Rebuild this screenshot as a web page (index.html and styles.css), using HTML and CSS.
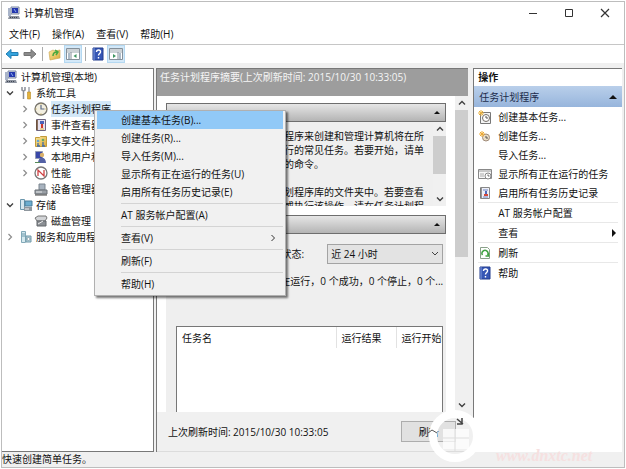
FILE: index.html
```html
<!DOCTYPE html>
<html lang="zh-CN">
<head>
<meta charset="utf-8">
<title>计算机管理</title>
<link rel="stylesheet" href="styles.css">
</head>
<body>
<svg class="defs" aria-hidden="true">
  <linearGradient id="gold" x1="0" y1="0" x2="1" y2="1"><stop offset="0" stop-color="#fbe9a0"/><stop offset="1" stop-color="#dba936"/></linearGradient>
  <symbol id="pc" viewBox="0 0 14 14"><path d="M4 1h8v7H4z" fill="#d5dae6" stroke="#7b86a3"/><path d="M5 2h6v5H5z" fill="#2437ae"/><path d="M1 2h3v8H1z" fill="#a9b4c9"/><path d="M7 3l2 3" stroke="#8fb0f0"/><path d="M2 10h10l1 3H1z" fill="#8d939f"/><path d="M3 11.500h8" stroke="#3e4553" stroke-dasharray="1 1"/></symbol>
  <symbol id="help" viewBox="0 0 12 14"><path d="M1 1h10v12H1z" fill="#3656b5" stroke="#223c8e"/><path d="M2 1v12" stroke="#7f9be0"/><path d="M4.500 5c0-3 4.500-2.500 4 0 0 1.500-2 1.500-2 3.500M6.500 10v1.500" fill="none" stroke="#fff" stroke-width="1.400"/></symbol>
  <symbol id="clock" viewBox="0 0 14 14"><circle cx="7" cy="7" r="6" fill="#f3efe0" stroke="#77746c" stroke-width="1.300"/><path d="M7 3v4h3.500" fill="none" stroke="#5d6b86" stroke-width="1.200"/><path d="M7 1.500v1M7 11.500v1M1.500 7h1M11.500 7h1" stroke="#c0a24a"/></symbol>
  <symbol id="window" viewBox="0 0 14 12"><path d="M.5.500h13v11H.5z" fill="#fff" stroke="#85909a"/><path d="M1 2h12M1 4h12" stroke="#9aa5ad"/></symbol>
  <symbol id="chev" viewBox="0 0 8 8"><path d="M2.500 1l3 3-3 3" fill="none" stroke="#8c8c8c" stroke-width="1.200"/></symbol>
  <symbol id="chevdown" viewBox="0 0 8 8"><path d="M1 2.500l3 3 3-3" fill="none" stroke="#404040" stroke-width="1.400"/></symbol>
  <symbol id="chevup" viewBox="0 0 8 8"><path d="M1 5.500l3-3 3 3" fill="none" stroke="#404040" stroke-width="1.400"/></symbol>
</svg>
<div class="window">
  <header class="titlebar">
    <svg class="ico" aria-hidden="true"><use href="#pc"/></svg>
    <h1>计算机管理</h1>
    <div class="winbtns">
      <button aria-label="最小化"><svg viewBox="0 0 10 10"><path d="M1 5.500h8" stroke="#333"/></svg></button>
      <button aria-label="最大化"><svg viewBox="0 0 10 10"><path d="M1.500 1.500h7v7h-7z" fill="none" stroke="#333"/></svg></button>
      <button aria-label="关闭"><svg viewBox="0 0 10 10"><path d="M1 1l8 8M9 1l-8 8" stroke="#333" stroke-width="1.200"/></svg></button>
    </div>
  </header>
  <nav class="menubar">
    <button>文件(F)</button><button>操作(A)</button><button>查看(V)</button><button>帮助(H)</button>
  </nav>
  <div class="toolbar">
    <button aria-label="后退"><svg viewBox="0 0 14 12"><path d="M1 6l5-4.500v3h7v3H6v3z" fill="#35a3dc" stroke="#237fb5"/></svg></button>
    <button aria-label="前进"><svg viewBox="0 0 14 12"><path d="M13 6L8 1.500v3H1v3h7v3z" fill="#8b8b8b" stroke="#757575"/></svg></button>
    <i class="vr"></i>
    <button aria-label="向上"><svg viewBox="0 0 14 12"><path d="M1 4l4-2 2 1 5-1v8L2 12z" fill="url(#gold)" stroke="#c8a04a" stroke-width=".6"/><path d="M5 8c0-3 2-4 4-4M7 2l3 2-2 3" fill="none" stroke="#4aa83f" stroke-width="1.500"/></svg></button>
    <button class="on" aria-label="显示控制台树"><svg viewBox="0 0 14 12"><use href="#window"/><path d="M5 4v8" stroke="#85909a"/><path d="M2 6h2M2 8h2M2 10h2" stroke="#5a7894"/><path d="M10.500 6v4l-3-2z" fill="#3d9560"/></svg></button>
    <i class="vr"></i>
    <button aria-label="帮助"><svg viewBox="0 0 14 14"><use href="#help" x="1" width="12" height="14"/></svg></button>
    <button class="on" aria-label="显示操作窗格"><svg viewBox="0 0 14 12"><use href="#window"/><path d="M9 4v8" stroke="#85909a"/><path d="M10 6h2M10 8h2M10 10h2" stroke="#5a7894"/><path d="M4 6v4l3-2z" fill="#3d9560"/></svg></button>
  </div>
  <main class="panes">
    <ul class="tree">
      <li><svg class="ico" aria-hidden="true"><use href="#pc"/></svg>计算机管理(本地)</li>
      <li class="l1"><svg class="exp" aria-hidden="true"><use href="#chevdown"/></svg><svg class="ico" viewBox="0 0 14 14" aria-hidden="true"><path d="M3 1v3l1.500 1L6 4V1M4.500 5v8" fill="none" stroke="#8b8f98" stroke-width="1.500"/><path d="M9 1h2v5H9z" fill="#b9bcc2"/><path d="M8.500 6h3v7h-3z" fill="#e3b23d" stroke="#b98c27" stroke-width=".6"/></svg>系统工具</li>
      <li class="l2"><svg class="exp" aria-hidden="true"><use href="#chev"/></svg><svg class="ico" aria-hidden="true"><use href="#clock"/></svg><span class="sel">任务计划程序</span></li>
      <li class="l2"><svg class="exp" aria-hidden="true"><use href="#chev"/></svg><svg class="ico" viewBox="0 0 14 14" aria-hidden="true"><path d="M2.500 1.500h9v11h-9z" fill="#e6e1ef" stroke="#6d6580"/><path d="M3 2v10" stroke="#6b4a2c" stroke-width="1.500"/><path d="M6 3h4v3H6z" fill="#4d63b8"/><path d="M8 6v4" stroke="#d0392c" stroke-width="2"/><path d="M6 11h4" stroke="#e7b93d"/></svg>事件查看器</li>
      <li class="l2"><svg class="exp" aria-hidden="true"><use href="#chev"/></svg><svg class="ico" viewBox="0 0 14 14" aria-hidden="true"><path d="M1.500 3.500h4l1-1h6v10h-11z" fill="url(#gold)" stroke="#c39b39"/><path d="M4 9v3M9 8v4M3 12h3M8 12h3" stroke="#416ca8" stroke-width="1.300"/><circle cx="4" cy="7" r="1.300" fill="#67a5cf"/><circle cx="9" cy="6" r="1.300" fill="#68a667"/></svg>共享文件夹</li>
      <li class="l2"><svg class="exp" aria-hidden="true"><use href="#chev"/></svg><svg class="ico" viewBox="0 0 14 14" aria-hidden="true"><path d="M1.500 1.500h7v7h-7z" fill="#3947a8" stroke="#929bb4"/><circle cx="8" cy="5" r="2.200" fill="#d9b06a"/><path d="M4 13c0-7 8-7 8 0z" fill="#5361a5"/><path d="M1 12h5v1H1z" fill="#578a58"/></svg>本地用户和组</li>
      <li class="l2"><svg class="exp" aria-hidden="true"><use href="#chev"/></svg><svg class="ico" viewBox="0 0 14 14" aria-hidden="true"><circle cx="7" cy="7" r="6" fill="#fff" stroke="#777" stroke-width="1.300"/><path d="M4 10V4l6 6V4" fill="none" stroke="#cd4143" stroke-width="1.300"/></svg>性能</li>
      <li class="l2"><i class="exp"></i><svg class="ico" viewBox="0 0 14 14" aria-hidden="true"><path d="M5 2h6v6H5z" fill="#a8b3bf" stroke="#7a858f"/><path d="M1 8h12v4H1z" fill="#9aa0a6" stroke="#6b7177"/><path d="M2 10h6" stroke="#e3e6e8"/><path d="M1 13h12" stroke="#444"/></svg>设备管理器</li>
      <li class="l1"><svg class="exp" aria-hidden="true"><use href="#chevdown"/></svg><svg class="ico" viewBox="0 0 14 14" aria-hidden="true"><path d="M1.500 1.500h4v10h-4z" fill="#d6e7ef" stroke="#6b97ad"/><path d="M6 3h7v5H6z" fill="#6caed0" stroke="#4b7d99"/><path d="M5 9h8v4H5z" fill="#8f979e"/><path d="M6 11h4" stroke="#eee"/></svg>存储</li>
      <li class="l2"><i class="exp"></i><svg class="ico" viewBox="0 0 14 14" aria-hidden="true"><path d="M1 4l3-2h8l1 2-2 3H3z" fill="#d2d4d7" stroke="#777"/><path d="M3 7h9v5H3z" fill="#8b8f94" stroke="#63676b"/><path d="M4 10l5-3" stroke="#eee"/></svg>磁盘管理</li>
      <li class="l1"><svg class="exp" aria-hidden="true"><use href="#chev"/></svg><svg class="ico" viewBox="0 0 14 14" aria-hidden="true"><path d="M2.500 1.500h4v11h-4z" fill="#d5e9ef" stroke="#83a9b8"/><path d="M3 4h3M3 6h3" stroke="#6e9aac"/><path d="M7 6h5v6H7z" fill="#b6d3df" stroke="#7198a7"/><circle cx="9.500" cy="9" r="1.500" fill="#fff" stroke="#617d88" stroke-width=".6"/></svg>服务和应用程序</li>
    </ul>

    <section class="center">
      <h2>任务计划程序摘要(上次刷新时间: 2015/10/30 10:33:05)</h2>
      <div class="scrollarea">
        <div class="cards">
          <div class="card overview">
            <button class="cardhead" aria-label="概述"><b class="tri"></b></button>
            <div class="cardbody">
              <p>您可以使用任务计划程序来创建和管理计算机将在所<br>您指定的时间自动执行的常见任务。若要开始，请单<br>击右侧操作菜单当中的命令。<br><br>各任务存储在任务计划程序库的文件夹中。若要查看<br>某个任务的详细信息或执行该操作，请在任务计划程</p>
              <div class="scroll inner"><svg><use href="#chevup"/></svg><i></i><svg><use href="#chevdown"/></svg></div>
            </div>
          </div>
          <div class="card status">
            <button class="cardhead" aria-label="任务状态"><b class="tri"></b></button>
            <div class="cardbody">
              <div class="period"><label for="period">状态:</label><select id="period"><option>近 24 小时</option></select></div>
              <p class="summary">正在运行，0 个成功，0 个停止，0 个...</p>
              <div class="tablebox">
                <table>
                  <thead><tr><th class="name">任务名</th><th class="res">运行结果</th><th>运行开始时间</th></tr></thead>
                </table>
              </div>
            </div>
          </div>
        </div>
        <div class="scroll outer"><svg><use href="#chevup"/></svg><i></i><svg><use href="#chevdown"/></svg></div>
      </div>
      <footer class="refresh"><span>上次刷新时间: 2015/10/30 10:33:05</span><button>刷新</button></footer>
    </section>

    <aside class="actions">
      <h2>操作</h2>
      <h3>任务计划程序<b class="tri"></b></h3>
      <ul>
        <li><svg class="ico" viewBox="0 0 14 14" aria-hidden="true"><path d="M2.500 2.500h10v11h-10z" fill="#f5f5f5" stroke="#777"/><circle cx="8" cy="8" r="3.500" fill="#fff" stroke="#746e68"/><path d="M8 6v2h2" fill="none" stroke="#555"/><path d="M0 3h6M3 0v6M1 1l4 4M5 1L1 5" stroke="#eab13c"/></svg><a href="#">创建基本任务...</a></li>
        <li><svg class="ico" viewBox="0 0 14 14" aria-hidden="true"><circle cx="8" cy="8.500" r="3.500" fill="#e9dcc4" stroke="#9f8a78"/><path d="M8 7v2h2" fill="none" stroke="#555"/><path d="M1 5h6M4 2v6M2 3l4 4M6 3L2 7" stroke="#eda932"/></svg><a href="#">创建任务...</a></li>
        <li><i class="ico"></i><a href="#">导入任务...</a></li>
        <li><svg class="ico" viewBox="0 0 14 14" aria-hidden="true"><path d="M.5 2.500h13v9H.5z" fill="#f7f7f7" stroke="#888"/><path d="M1 4h12" stroke="#999"/><path d="M2 7h4M2 9h4" stroke="#aaa"/><circle cx="10" cy="9" r="3" fill="#fff" stroke="#888"/><path d="M10 7.500V9h1.500" fill="none" stroke="#666"/></svg><a href="#">显示所有正在运行的任务</a></li>
        <li class="line"><svg class="ico" viewBox="0 0 14 14" aria-hidden="true"><path d="M2.500 1.500h9v11h-9z" fill="#eef0f8" stroke="#888"/><path d="M3 2v10" stroke="#777" stroke-width="1.500"/><path d="M5 4h5M5 11h5" stroke="#6f83bf"/><path d="M8 5v3" stroke="#5269bb" stroke-width="2"/><path d="M6 9h4" stroke="#d4493b" stroke-width="2"/></svg><a href="#">启用所有任务历史记录</a></li>
        <li class="line"><i class="ico"></i><a href="#">AT 服务帐户配置</a></li>
        <li class="line"><i class="ico"></i><a href="#">查看</a><b class="more"></b></li>
        <li class="line"><svg class="ico" viewBox="0 0 14 14" aria-hidden="true"><path d="M2.500 1.500h7l2 2v9h-9z" fill="#fff" stroke="#8aa08a"/><path d="M4.500 9a3 3 0 1 1 5 0M10.500 7v3h-3" fill="none" stroke="#3fa241" stroke-width="1.500"/></svg><a href="#">刷新</a></li>
        <li><svg class="ico" aria-hidden="true"><use href="#help"/></svg><a href="#">帮助</a></li>
      </ul>
    </aside>
  </main>
  <footer class="statusbar">快速创建简单任务。</footer>

  <div class="context" role="menu">
    <button class="hot" role="menuitem">创建基本任务(B)...</button>
    <button role="menuitem">创建任务(R)...</button>
    <button role="menuitem">导入任务(M)...</button>
    <button role="menuitem">显示所有正在运行的任务(U)</button>
    <button role="menuitem">启用所有任务历史记录(E)</button>
    <hr>
    <button role="menuitem">AT 服务帐户配置(A)</button>
    <hr>
    <button role="menuitem">查看(V)<svg viewBox="0 0 8 8"><path d="M2.500 1l3 3-3 3" fill="none" stroke="#333"/></svg></button>
    <hr>
    <button role="menuitem">刷新(F)</button>
    <hr>
    <button role="menuitem">帮助(H)</button>
  </div>

  <div class="mark">
    <svg viewBox="0 0 54 54" aria-hidden="true"><circle cx="27" cy="27" r="22" fill="none" stroke="#fff" stroke-width="8"/><path d="M15 20h26v20H15z" fill="#fff" opacity=".75"/><path d="M27 20v22M15 29h26" stroke="#ddd"/><path d="M29 10l6 5M34 9v6h-5" fill="none" stroke="#444" stroke-width="1.500"/><path d="M0 24l4-3 5 3" fill="none" stroke="#555"/></svg>
    <div><strong>电脑系统城</strong><span>www.dnxtc.net</span></div>
  </div>
</div>
</body>
</html>
```
FILE: styles.css
```css
* { box-sizing: border-box; }
html, body { height: 100%; margin: 0; }
body {
  padding: 1px;
  background: #fff;
  color: #111;
  font: 10px/16px "Open Sans", "Noto Sans CJK SC", sans-serif;
}
button, select { font: inherit; color: inherit; border: 0; padding: 0; margin: 0; background: none; }
ul { list-style: none; margin: 0; padding: 0; }
h1, h2, h3, p { margin: 0; font: inherit; }
a { color: inherit; text-decoration: none; }
svg { display: block; flex: none; }
.defs { position: absolute; width: 0; height: 0; }
.ico { width: 14px; height: 14px; flex: none; }

.window {
  position: relative;
  height: 100%;
  display: flex;
  flex-direction: column;
  border: 1px solid #bdbdbd;
  background: #fff;
  overflow: hidden;
}
.titlebar { display: flex; align-items: center; gap: 3px; height: 22px; padding-left: 5px; flex: none; }
.winbtns { display: flex; margin-left: auto; padding-right: 1px; }
.winbtns button { width: 36px; height: 22px; display: grid; place-items: center; }
.winbtns svg { width: 10px; height: 10px; }
.menubar { display: flex; gap: 12px; height: 21px; padding-left: 7px; flex: none; border-bottom: 1px solid #c6c6c6; }
.toolbar { display: flex; align-items: center; height: 18px; padding-left: 1px; flex: none; }
.toolbar button { width: 18px; height: 18px; display: grid; place-items: center; }
.toolbar button svg { width: 14px; height: 14px; }
.toolbar .on { background: #d3e8f8; border: 1px solid #b4d8f1; }
.vr { width: 1px; height: 14px; margin: 0 3px; background: #ababab; }

.panes { flex: 1; min-height: 0; display: flex; padding: 5px 2px 0 0; background: #f0f0f0; }
.tree {
  width: 24.5%;
  flex: none;
  border: 1px solid #787878;
  border-left: 0;
  background: #fff;
  overflow: hidden;
  white-space: nowrap;
}
.tree li { display: flex; align-items: center; height: 16px; padding-left: 2px; gap: 3px; }
.tree .l1 { padding-left: 4px; }
.tree .l2 { padding-left: 19px; }
.exp { width: 8px; height: 8px; flex: none; margin-right: 2px; }
.sel { background: #d3e8f8; }

.center {
  flex: 1;
  min-width: 0;
  display: flex;
  flex-direction: column;
  margin: 0 5px 0 2px;
  border-top: 1px solid #787878;
  border-left: 1px solid #787878;
  background: #fff;
}
.center h2 { height: 27px; padding-left: 3px; background: #9d9d9d; color: #f5f5f5; flex: none; white-space: nowrap; overflow: hidden; }
.scrollarea { flex: 1; min-height: 0; display: flex; }
.cards { flex: 1; min-width: 0; display: flex; flex-direction: column; padding: 7px 9px 0 9px; gap: 9px; }
.cardhead {
  display: flex;
  justify-content: flex-end;
  align-items: center;
  width: 100%;
  height: 19px;
  padding-right: 5px;
  border: 1px solid #6e6e6e;
  background: linear-gradient(#e6e6e6, #b4b4b4);
}
.tri { width: 0; height: 0; border: 3px solid transparent; border-top: 0; border-bottom-color: #111; }
.cardbody { background: #efefef; }
.overview .cardbody { display: flex; height: 84px; overflow: hidden; }
.overview p { flex: 1; padding: 7px 0 0 28px; line-height: 14px; white-space: nowrap; }
.scroll { display: flex; flex-direction: column; align-items: center; background: #f0f0f0; flex: none; }
.scroll svg { width: 8px; height: 8px; }
.scroll i { width: 100%; background: #cdcdcd; }
.inner { width: 13px; padding: 3px 0; }
.inner i { height: 38px; margin: 3px 0 auto; }
.outer { width: 13px; padding: 3px 0; }
.outer i { height: 147px; margin: 3px 0 auto; }
.status { flex: 1; min-height: 0; display: flex; flex-direction: column; }
.status .cardbody { flex: 1; min-height: 0; display: flex; flex-direction: column; padding: 10px 3px 0 10px; }
.period { display: flex; justify-content: flex-end; align-items: center; gap: 23px; }
.period select {
  appearance: none;
  width: 116px;
  height: 20px;
  padding: 0 3px;
  border: 1px solid #a3a3a3;
  background: #e3e3e3 url("data:image/svg+xml,%3Csvg xmlns='http://www.w3.org/2000/svg' width='8' height='8'%3E%3Cpath d='M1 2l3 3 3-3' fill='none' stroke='%23444'/%3E%3C/svg%3E") no-repeat right 3px center;
}
.summary { margin: 9px 0 37px; text-align: right; white-space: nowrap; }
.tablebox { flex: 1; min-height: 0; overflow: hidden; border: 1px solid #777; border-bottom: 0; background: #fff; }
table { width: 100%; table-layout: fixed; border-collapse: collapse; }
th { height: 21px; padding: 0 0 0 5px; font-weight: 400; text-align: left; white-space: nowrap; overflow: hidden; border-right: 1px solid #e2e2e2; }
th:last-child { border-right: 0; }
.name { width: 60%; }
.res { width: 60px; }
.refresh {
  display: flex;
  align-items: center;
  justify-content: space-between;
  height: 40px;
  flex: none;
  padding: 0 12px 0 11px;
  background: #f0f0f0;
  border-bottom: 1px solid #dcdcdc;
}
.refresh button { width: 55px; height: 21px; border: 1px solid #adadad; background: #e1e1e1; }

.actions { width: 24%; flex: none; border: 1px solid #787878; border-right: 0; border-bottom: 0; background: #fff; }
.actions h2 { height: 17px; padding-left: 4px; font-weight: 700; }
.actions h3 { display: flex; align-items: center; justify-content: space-between; height: 21px; padding: 0 5px; background: linear-gradient(#b9cfea, #97b5dc); color: #1c2c4c; }
.actions .tri { border-width: 0 4px 4px; }
.actions li { display: flex; align-items: center; height: 19px; margin: 0 4px; padding-right: 2px; gap: 6px; white-space: nowrap; }
.actions .line { height: 20px; border-bottom: 1px solid #e8e8e8; }
.more { margin-left: auto; border: 4px solid transparent; border-right: 0; border-left-color: #111; }
.statusbar { height: 15px; flex: none; line-height: 15px; background: #f0f0f0; }

.context {
  position: absolute;
  left: 92px;
  top: 108px;
  width: 192px;
  padding: 0 2px 2px;
  border: 1px solid #b0b0b0;
  background: #f1f1f1;
  box-shadow: 2px 2px 2px #0008;
}
.context button { display: flex; align-items: center; justify-content: space-between; width: 100%; height: 18px; padding: 0 6px 0 24px; text-align: left; }
.context .hot { background: #91c9f7; }
.context svg { width: 8px; height: 8px; }
.context hr { margin: 2px 0 2px 24px; border: 0; height: 1px; background: #d4d4d4; }

.mark { position: absolute; right: 0; bottom: 0; display: flex; align-items: center; gap: 14px; }
.mark > svg { width: 54px; height: 54px; margin-bottom: 4px; }
.mark div { display: flex; flex-direction: column; width: 128px; white-space: nowrap; }
.mark strong { font-size: 25px; line-height: 36px; color: #fff; }
.mark span { font: italic 700 16px/18px "Liberation Serif", serif; color: #f6e0e0; }
```
